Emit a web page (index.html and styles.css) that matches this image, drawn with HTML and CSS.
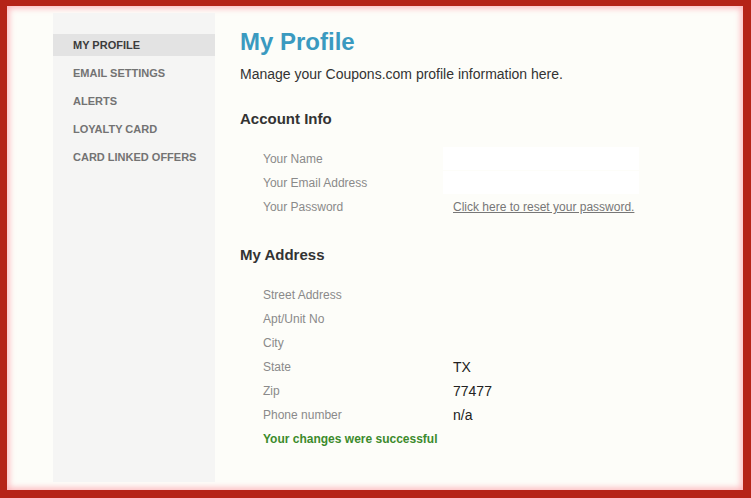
FILE: index.html
```html
<!DOCTYPE html>
<html>
<head>
    <title>My Profile</title>
    <link rel="stylesheet" href="styles.css">
</head>
<body>
    <div class="frame">
        <ul class="side-nav">
            <li class="active">MY PROFILE</li>
            <li>EMAIL SETTINGS</li>
            <li>ALERTS</li>
            <li>LOYALTY CARD</li>
            <li>CARD LINKED OFFERS</li>
        </ul>

        <div class="content">
            <h1>My Profile</h1>
            <p class="intro">Manage your Coupons.com profile information here.</p>

            <h2>Account Info</h2>
            <div class="fields">
                <span class="label">Your Name</span>
                <input type="text" class="field-input">
                <span class="label">Your Email Address</span>
                <input type="text" class="field-input">
                <span class="label">Your Password</span>
                <a href="#" class="reset-link">Click here to reset your password.</a>
            </div>

            <h2 class="address-title">My Address</h2>
            <div class="fields">
                <span class="label">Street Address</span>
                <span class="value"></span>
                <span class="label">Apt/Unit No</span>
                <span class="value"></span>
                <span class="label">City</span>
                <span class="value"></span>
                <span class="label">State</span>
                <span class="value">TX</span>
                <span class="label">Zip</span>
                <span class="value">77477</span>
                <span class="label">Phone number</span>
                <span class="value">n/a</span>
            </div>
            <p class="success">Your changes were successful</p>
        </div>
    </div>
</body>
</html>
```

FILE: styles.css
```css
html, body {
    margin: 0;
    height: 100%;
}

body {
    background-color: #b52418;
    font-family: "Liberation Sans", Arial, sans-serif;
    padding: 6px 8px 8px 7px;
    box-sizing: border-box;
}

.frame {
    height: 484px;
    background-color: #fdfdf9;
    box-shadow: inset 0 0 6px 2px rgba(255, 150, 160, 0.7);
    display: flex;
    padding: 7px 0 8px 46px;
    box-sizing: border-box;
}

.side-nav {
    list-style: none;
    margin: 0;
    padding: 21px 0 0 0;
    width: 162px;
    background-color: #f5f5f4;
}

.side-nav li {
    height: 22px;
    line-height: 22px;
    margin-bottom: 6px;
    padding-left: 20px;
    font-size: 11px;
    font-weight: bold;
    color: #737373;
}

.side-nav li.active {
    background-color: #e3e3e3;
    color: #3c3c3c;
}

.content {
    padding: 15px 0 0 25px;
    flex: 1;
}

h1 {
    margin: 0;
    font-size: 24px;
    line-height: 28px;
    color: #3a9ac0;
}

.intro {
    margin: 8px 0 0 0;
    font-size: 14px;
    line-height: 20px;
    color: #333;
}

h2 {
    margin: 25px 0 0 0;
    font-size: 15px;
    line-height: 20px;
    color: #333;
}

.address-title {
    margin-top: 26px;
}

.fields {
    display: grid;
    grid-template-columns: 180px 196px;
    grid-auto-rows: 24px;
    margin: 18px 0 0 23px;
    align-items: center;
}

.label {
    font-size: 12px;
    color: #8a8a8a;
}

.field-input {
    height: 23px;
    border: none;
    background-color: #ffffff;
    margin: 0;
    padding: 0 10px;
    box-sizing: border-box;
    align-self: start;
}

.reset-link {
    padding-left: 10px;
    font-size: 12px;
    color: #777;
}

.value {
    padding-left: 10px;
    font-size: 14px;
    color: #222;
}

.success {
    margin: 0 0 0 23px;
    line-height: 24px;
    font-size: 12px;
    font-weight: bold;
    color: #3c8b2c;
}
```
